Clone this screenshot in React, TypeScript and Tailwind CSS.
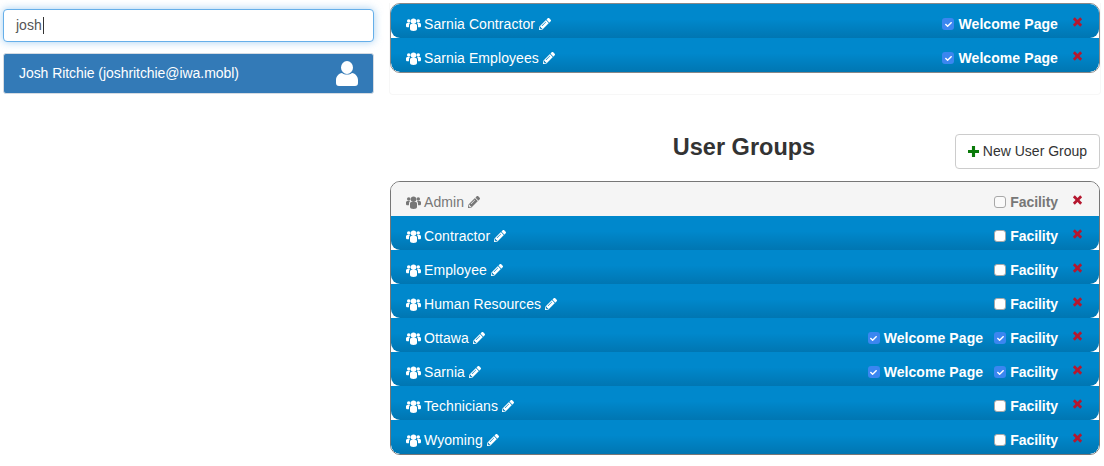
import { FaPencilAlt, FaCheck } from "react-icons/fa";

const UsersIcon = ({ className }: { className?: string }) => (
  <svg viewBox="0 0 30 26" className={className} fill="currentColor" aria-hidden="true">
    <circle cx="15" cy="6.5" r="5.5" />
    <circle cx="5.5" cy="6" r="3.6" />
    <circle cx="24.5" cy="6" r="3.6" />
    <path d="M8 15c0-1.800 1.400-3 3-3h8c1.600 0 3 1.200 3 3v7c0 2.500-2.500 4-7 4s-7-1.500-7-4z" />
    <path d="M0 13c0-1.800 1.200-3 3-3h3.200c.8 0 1.300.300 1.600 1-1.200.800-1.900 2.200-1.900 4v3.600H3c-1.800 0-3-.900-3-2.600z" />
    <path d="M30 13c0-1.800-1.200-3-3-3h-3.200c-.8 0-1.300.300-1.600 1 1.200.800 1.900 2.200 1.900 4v3.600H27c1.800 0 3-.900 3-2.600z" />
  </svg>
);

const XIcon = () => (
  <svg viewBox="0 0 12 12" className="mb-[4px] ml-[14px] h-[12px] w-[11px] text-[#b5172f]" aria-hidden="true">
    <path d="M2 2l8 8M10 2l-8 8" stroke="currentColor" strokeWidth="3" strokeLinecap="butt" fill="none" />
  </svg>
);

const PlusIcon = () => (
  <svg viewBox="0 0 12 12" className="mr-[4px] h-[11px] w-[11px] text-[#0a7a0a]" aria-hidden="true">
    <path d="M6 0v12M0 6h12" stroke="currentColor" strokeWidth="3.4" fill="none" />
  </svg>
);

const UserIcon = () => (
  <svg viewBox="0 0 22 25" className="h-[25px] w-[22px]" fill="currentColor" aria-hidden="true">
    <ellipse cx="11" cy="6.500" rx="6" ry="6.500" />
    <path d="M0 19c0-3.500 2.500-6.500 6-7 1.400 1 3 1.500 5 1.500s3.600-.5 5-1.500c3.500.5 6 3.500 6 7v3c0 2-1 3-3 3H3c-2 0-3-1-3-3z" />
  </svg>
);

const Check = ({ on, light }: { on: boolean; light?: boolean }) =>
  on ? (
    <span className="flex h-[12px] w-[12px] items-center justify-center rounded-[3px] bg-[#3b86f0] text-white">
      <FaCheck className="h-[7px] w-[7px]" />
    </span>
  ) : (
    <span className={`h-[12px] w-[12px] rounded-[3px] border border-[#a8a8a8] ${light ? "bg-[#fafafa]" : "bg-white"}`} />
  );

type RowProps = { name: string; welcome?: boolean; wOn?: boolean; facility?: boolean; fOn?: boolean; light?: boolean };

function Row({ name, welcome, wOn, facility, fOn, light }: RowProps) {
  return (
    <div className={`h-[34px] ${light ? "bg-[#f5f5f5]" : "bg-white"}`}>
      <div
        className={`flex h-[34px] items-center pl-[15px] pr-[16px] pt-[6px] ${
          light
            ? "bg-[#f5f5f5] text-[#777777]"
            : "rounded-b-[9px] bg-gradient-to-b from-[#0088cc] from-45% to-[#0076b2] text-white"
        }`}
      >
        <UsersIcon className="h-[13px] w-[15px]" />
        <span className="ml-[3px] text-[14px] tracking-[0.08px]">{name}</span>
        <FaPencilAlt className="ml-[4px] h-[12px] w-[12px]" />
        <div className="ml-auto flex items-center">
          {welcome && (
            <label className={`flex items-center gap-[4px] ${facility ? "mr-[11px]" : ""}`}>
              <Check on={!!wOn} />
              <span className="text-[14px] font-bold tracking-[0.08px]">Welcome Page</span>
            </label>
          )}
          {facility && (
            <label className="flex items-center gap-[4px]">
              <Check on={!!fOn} light={light} />
              <span className="text-[14px] font-bold tracking-[-0.05px]">Facility</span>
            </label>
          )}
          <XIcon />
        </div>
      </div>
    </div>
  );
}

const groups: RowProps[] = [
  { name: "Contractor" },
  { name: "Employee" },
  { name: "Human Resources" },
  { name: "Ottawa", welcome: true, wOn: true, fOn: true },
  { name: "Sarnia", welcome: true, wOn: true, fOn: true },
  { name: "Technicians" },
  { name: "Wyoming" },
];

export default function App() {
  return (
    <div className="flex h-[466px] w-[1104px] overflow-hidden bg-white font-['Liberation_Sans',Arial,sans-serif] text-[#333333]">
      <div className="ml-[3px] mt-[9px] w-[371px]">
        <div className="flex h-[33px] items-center rounded-[4px] border border-[#66afe9] bg-white pl-[12px] text-[14px] text-[#555555] shadow-[0_0_8px_rgba(102,175,233,0.6)]">
          josh<span className="ml-px h-[17px] w-px bg-[#333333]" />
        </div>
        <div className="mt-[11px] flex h-[41px] items-center justify-between rounded-[3px] border border-[#d5dbe2] bg-[#337ab7] pl-[15px] pr-[15px] text-[14px] text-white">
          <span className="tracking-[-0.06px]">Josh Ritchie (joshritchie@iwa.mobl)</span>
          <UserIcon />
        </div>
      </div>

      <div className="ml-[16px] w-[710px]">
        <div className="-ml-px mt-[3px] w-[712px] rounded-b-[4px] border-x border-b border-[#f7f7f7] pb-[21px]">
          <div className="overflow-hidden rounded-[10px] border border-[#888888]">
            <Row name="Sarnia Contractor" welcome wOn />
            <Row name="Sarnia Employees" welcome wOn />
          </div>
        </div>

        <div className="relative mt-[39px] flex h-[35px] items-start justify-center">
          <h2 className="mr-[2px] text-[23.5px] font-bold leading-[26px] text-[#333333]">User Groups</h2>
          <button className="absolute right-0 top-0 flex h-[35px] w-[145px] items-center justify-center rounded-[4px] border border-[#cccccc] bg-white text-[14px] text-[#333333]">
            <PlusIcon />
            New User Group
          </button>
        </div>

        <div className="mt-[12px] overflow-hidden rounded-[10px] border border-[#777777]">
          <Row name="Admin" facility light />
          {groups.map((g) => (
            <Row key={g.name} {...g} facility />
          ))}
        </div>
      </div>
    </div>
  );
}
